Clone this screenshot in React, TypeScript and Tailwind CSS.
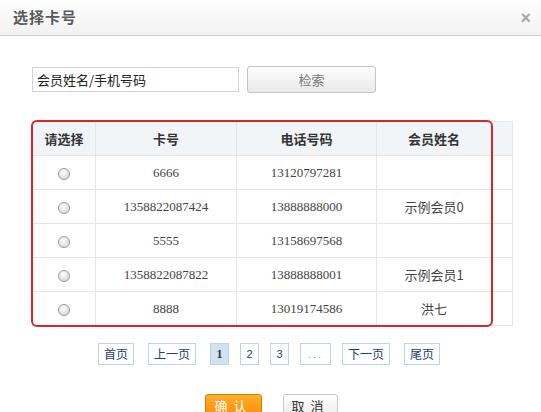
const rows = [
  { card: "6666", phone: "13120797281", name: "" },
  { card: "1358822087424", phone: "13888888000", name: "示例会员0" },
  { card: "5555", phone: "13158697568", name: "" },
  { card: "1358822087822", phone: "13888888001", name: "示例会员1" },
  { card: "8888", phone: "13019174586", name: "洪七" },
];

const cjk = "font-['SimSun','Noto_Sans_CJK_SC',sans-serif]";

function Radio() {
  return (
    <span className="inline-block h-[12px] w-[12px] rounded-full border border-[#9a9a9a] bg-[radial-gradient(circle_at_40%_35%,#fdfdfd,#cfcfcf)]" />
  );
}

function PageBtn({ label, active, w }: { label: string; active?: boolean; w: string }) {
  return (
    <span
      className={`flex h-[22px] ${w} items-center justify-center border border-[#bcd4e2] text-[12px] ${
        active ? "bg-[#cfe3f2] font-bold text-[#333] font-['Liberation_Serif',serif]" : "bg-white text-[#1b3f6e]"
      }`}
    >
      {label}
    </span>
  );
}

export default function App() {
  return (
    <div className={`h-[412px] w-[541px] overflow-hidden bg-white ${cjk} text-[12px] text-[#333]`}>
      {/* Title bar */}
      <div className="flex h-[36px] items-center justify-between border-b border-[#cfcfcf] bg-[linear-gradient(to_bottom,#ffffff,#f1f1f1)] pl-[13px] pr-[10px]">
        <span className="text-[15px] font-bold tracking-[1px] text-[#5a5a5a]">选择卡号</span>
        <span className="text-[18px] font-bold leading-none text-[#a8a8a8] font-['Liberation_Sans',sans-serif]">×</span>
      </div>

      {/* Search */}
      <div className="mt-[30px] flex items-center gap-[8px] pl-[32px]">
        <div className="flex h-[25px] w-[207px] items-center border border-[#d4d4d4] pl-[4px] text-[13px] text-[#222]">
          会员姓名/手机号码
        </div>
        <button className="flex h-[27px] w-[129px] items-center justify-center rounded-[3px] border border-[#c4c4c4] bg-[linear-gradient(to_bottom,#fdfdfd,#e9e9e9)] text-[13px] text-[#777]">
          检索
        </button>
      </div>

      {/* Table */}
      <div className="relative ml-[32px] mt-[28px] w-[480px]">
        <table className="w-[480px] table-fixed border-collapse">
          <colgroup>
            <col className="w-[63px]" />
            <col className="w-[141px]" />
            <col className="w-[140px]" />
            <col className="w-[115px]" />
            <col className="w-[21px]" />
          </colgroup>
          <thead>
            <tr className="h-[34px] bg-[#f1f5f8]">
              <th className="border border-[#e6e6e6] text-[13px] font-bold text-[#333]">请选择</th>
              <th className="border border-[#e6e6e6] text-[13px] font-bold text-[#333]">卡号</th>
              <th className="border border-[#e6e6e6] text-[13px] font-bold text-[#333]">电话号码</th>
              <th className="border border-[#e6e6e6] text-[13px] font-bold text-[#333]">会员姓名</th>
              <th className="border border-[#e6e6e6]" />
            </tr>
          </thead>
          <tbody>
            {rows.map((r) => (
              <tr key={r.card} className="h-[34px]">
                <td className="border border-[#e6e6e6] text-center">
                  <span className="inline-flex translate-y-[2px]">
                    <Radio />
                  </span>
                </td>
                <td className="border border-[#e6e6e6] text-center font-['Liberation_Serif',serif] text-[13px] text-[#444]">
                  {r.card}
                </td>
                <td className="border border-[#e6e6e6] text-center font-['Liberation_Serif',serif] text-[13px] text-[#444]">
                  {r.phone}
                </td>
                <td className="border border-[#e6e6e6] text-center text-[13px] text-[#444]">{r.name}</td>
                <td className="border border-[#e6e6e6]" />
              </tr>
            ))}
          </tbody>
        </table>
        <div className="pointer-events-none absolute left-[-1px] top-[-1px] h-[207px] w-[462px] rounded-[6px] border-2 border-[#d8252b]" />
      </div>

      {/* Pagination */}
      <div className="ml-[98px] mt-[17px] flex items-center">
        <PageBtn label="首页" w="w-[36px]" />
        <span className="w-[14px]" />
        <PageBtn label="上一页" w="w-[48px]" />
        <span className="w-[14px]" />
        <PageBtn label="1" active w="w-[19px]" />
        <span className="w-[11px]" />
        <span className="flex h-[22px] w-[19px] items-center justify-center border border-[#bcd4e2] font-['Liberation_Sans',sans-serif] text-[11px] text-[#1b3f6e]">2</span>
        <span className="w-[11px]" />
        <span className="flex h-[22px] w-[19px] items-center justify-center border border-[#bcd4e2] font-['Liberation_Sans',sans-serif] text-[11px] text-[#1b3f6e]">3</span>
        <span className="w-[11px]" />
        <span className="flex h-[22px] w-[31px] items-center justify-center border border-[#bcd4e2] font-['Liberation_Sans',sans-serif] text-[11px] tracking-[2px] text-[#999]">...</span>
        <span className="w-[11px]" />
        <PageBtn label="下一页" w="w-[48px]" />
        <span className="w-[14px]" />
        <PageBtn label="尾页" w="w-[36px]" />
      </div>

      {/* Actions */}
      <div className="ml-[205px] mt-[29px] flex gap-[21px]">
        <button className="h-[24px] w-[57px] rounded-[3px] border border-[#e07a00] bg-[linear-gradient(to_bottom,#ffb02e,#ff8a00)] text-[13px] tracking-[6px] text-white">
          确认
        </button>
        <button className="h-[24px] w-[55px] rounded-[3px] border border-[#c8c8c8] bg-[linear-gradient(to_bottom,#ffffff,#ececec)] text-[13px] tracking-[6px] text-[#333]">
          取消
        </button>
      </div>
    </div>
  );
}
